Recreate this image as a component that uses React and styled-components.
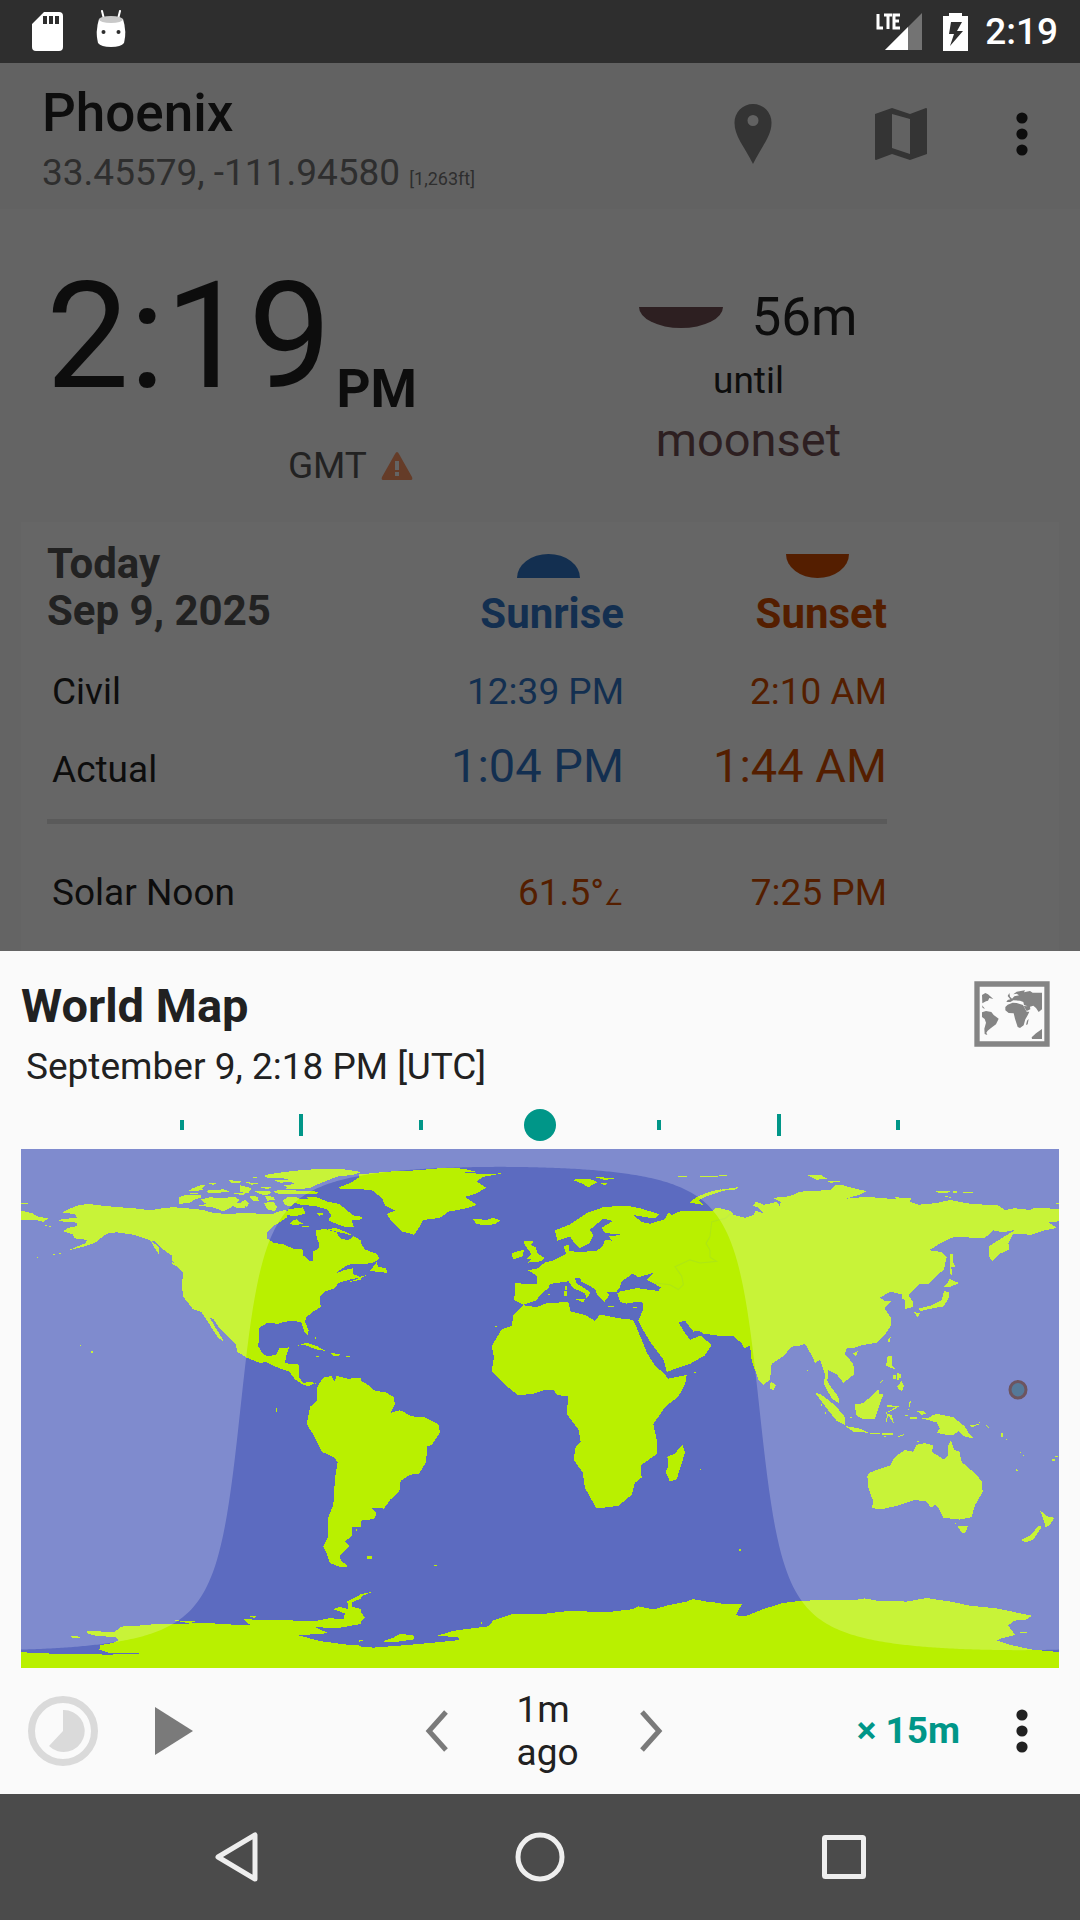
import React, { useState } from "react";
import styled, { createGlobalStyle } from "styled-components";

const GlobalStyle = createGlobalStyle`
  * { box-sizing: border-box; }
  body { margin: 0; background: #646464; font-family: Roboto, "Noto Sans", sans-serif; }
`;

const ink = "#0d0d0d";
const blue = "#132f50";
const orange = "#541e00";
const teal = "#009688";

const Screen = styled.div`
  min-height: 100vh;
  display: flex;
  flex-direction: column;
  color: ${ink};
  font-size: 37px;
  line-height: 44px;
`;
const StatusBar = styled.header`
  height: 63px;
  padding: 0 22px 0 32px;
  display: flex;
  align-items: center;
  justify-content: space-between;
  background: #2e2e2e;
  color: #fff;
`;
const StatusGroup = styled.div`
  display: flex;
  align-items: center;
  gap: ${(p) => p.$gap}px;
`;
const StatusTime = styled.span`
  font-weight: 500;
  margin-left: -4px;
`;
const ActionBar = styled.div`
  display: flex;
  justify-content: space-between;
  padding: 18px 36px 14px 42px;
  background: #626262;
`;
const City = styled.h1`
  margin: 0 0 6px;
  font-size: 53px;
  line-height: 64px;
  font-weight: 500;
`;
const Coordinates = styled.div`
  color: #2e2e2e;
  small { font-size: 18px; line-height: 20px; }
`;
const Actions = styled.div`
  display: flex;
  align-items: center;
  gap: 50px;
  padding-bottom: 8px;
`;
const IconButton = styled.button`
  display: flex;
  align-items: center;
  justify-content: center;
  width: ${(p) => p.$w}px;
  height: ${(p) => p.$h || 80}px;
  padding: 0;
  border: 0;
  background: none;
  color: inherit;
  cursor: pointer;
  svg { display: block; flex: none; }
`;
const ClockSection = styled.section`
  display: flex;
  align-items: flex-start;
  padding: 54px 0 34px 46px;
`;
const ClockRow = styled.div`
  display: flex;
  align-items: flex-end;
  gap: 5px;
`;
const ClockTime = styled.time`
  font-size: 148px;
  line-height: 148px;
`;
const Meridiem = styled.span`
  font-size: 53px;
  line-height: 44px;
  font-weight: 700;
`;
const ZoneRow = styled.div`
  display: flex;
  align-items: center;
  justify-content: flex-end;
  gap: 14px;
  margin-top: 33px;
  padding-right: 4px;
  color: #222;
`;
const NextEvent = styled.div`
  flex: 1;
  display: flex;
  flex-direction: column;
  align-items: center;
  gap: 10px;
  padding-top: 22px;
`;
const Countdown = styled.div`
  display: flex;
  align-items: center;
  gap: 28px;
  font-size: 53px;
  line-height: 64px;
`;
const HalfDisc = styled.span`
  display: block;
  width: ${(p) => p.$w}px;
  height: ${(p) => p.$h}px;
  background: ${(p) => p.$color};
  border-radius: ${(p) => (p.$up ? "50% 50% 0 0 / 100% 100% 0 0" : "0 0 50% 50% / 0 0 100% 100%")};
`;
const EventName = styled.div`
  font-size: 47px;
  line-height: 54px;
  color: #2d1f21;
`;
const Card = styled.section`
  flex: 1;
  margin: 0 21px;
  padding: 18px 172px 0 26px;
  background: #666;
`;
const SunTable = styled.table`
  width: 100%;
  table-layout: fixed;
  border-spacing: 0;
`;
const TimeCol = styled.col`
  width: 263px;
`;
const DateHead = styled.th`
  padding: 0;
  text-align: left;
  vertical-align: top;
  font-size: 42px;
  line-height: 47px;
  font-weight: 700;
  color: #222;
`;
const SunHead = styled.th`
  padding: 14px 0 0;
  text-align: right;
  font-size: 42px;
  line-height: 47px;
  font-weight: 700;
  color: ${(p) => p.$color};
`;
const HeadStack = styled.span`
  display: inline-flex;
  flex-direction: column;
  align-items: center;
  gap: 12px;
  vertical-align: top;
`;
const HeadText = styled.span`
  padding-left: 7px;
`;
const SunRow = styled.tr`
  th, td {
    padding-top: ${(p) => p.$top}px;
    padding-bottom: ${(p) => p.$bottom}px;
    padding-right: 0;
    vertical-align: baseline;
    border-bottom: ${(p) => (p.$ruled ? "5px solid #5a5a5a" : "0")};
  }
`;
const RowLabel = styled.th`
  padding-left: 5px;
  text-align: left;
  font-weight: 400;
`;
const TimeCell = styled.td`
  padding-left: 0;
  text-align: right;
  color: ${(p) => p.$color};
  font-size: ${(p) => (p.$large ? 47 : 37)}px;
  line-height: ${(p) => (p.$large ? 56 : 44)}px;
  small { font-size: 22px; line-height: 22px; }
`;
const Sheet = styled.section`
  padding: 28px 21px 0;
  background: #fafafa;
  color: #212121;
`;
const SheetHead = styled.div`
  display: flex;
  justify-content: space-between;
  align-items: flex-start;
  padding-right: 9px;
`;
const SheetTitle = styled.h2`
  margin: 0 0 12px;
  font-size: 47px;
  line-height: 54px;
  font-weight: 700;
`;
const SheetDate = styled.div`
  padding-left: 5px;
`;
const Seek = styled.div`
  display: grid;
  height: 36px;
  margin: 18px 0 6px;
  align-items: center;
`;
const Ticks = styled.div`
  grid-area: 1 / 1;
  display: grid;
  grid-template-columns: repeat(7, 1fr);
  align-items: center;
  justify-items: center;
  padding: 0 101px;
`;
const Tick = styled.span`
  width: 4px;
  height: ${(p) => (p.$tall ? 22 : 10)}px;
  background: ${teal};
`;
const SeekInput = styled.input`
  grid-area: 1 / 1;
  appearance: none;
  width: 100%;
  height: 32px;
  margin: 0;
  background: transparent;
  &::-webkit-slider-thumb {
    appearance: none;
    width: 32px;
    height: 32px;
    border-radius: 50%;
    background: ${teal};
  }
`;
const MapSvg = styled.svg`
  display: block;
  width: 100%;
  aspect-ratio: 2 / 1;
`;
const Controls = styled.div`
  display: flex;
  align-items: center;
  height: 126px;
  padding-left: 7px;
`;
const ControlGroup = styled.div`
  flex: 1;
  display: flex;
  align-items: center;
  justify-content: ${(p) => (p.$end ? "flex-end" : "flex-start")};
  gap: ${(p) => p.$gap}px;
`;
const Stepper = styled.div`
  display: flex;
  align-items: center;
  gap: 50px;
`;
const Offset = styled.span`
  width: 66px;
  padding-left: 6px;
  line-height: 43px;
`;
const SpeedButton = styled.button`
  padding: 0;
  border: 0;
  background: none;
  font: 700 37px / 44px Roboto, sans-serif;
  color: ${teal};
`;
const NavBar = styled.nav`
  display: grid;
  grid-template-columns: repeat(3, 1fr);
  justify-items: center;
  align-items: center;
  height: 126px;
  padding: 0 84px;
  background: #4b4b4b;
  color: #eee;
`;

const Dots = () => (
  <svg width="12" height="44" viewBox="0 0 12 44" fill="currentColor">
    <circle cx="6" cy="6" r="5.6" /><circle cx="6" cy="22" r="5.6" /><circle cx="6" cy="38" r="5.6" />
  </svg>
);

/* Coast lines, one list for each third of the map, 1080 units wide. */
const west = [
  "M185,210 215,197 240,188 270,186 310,191 370,196 410,199 450,204 480,199 520,195 570,199 610,203 640,212 690,215 720,212 760,213 790,214 815,216 835,208 850,204 866,205 860,225 845,235 830,244 820,250 803,265 800,285 820,298 850,303 880,315 908,318 910,335 930,352 940,350 938,325 955,315 958,300 950,285 948,262 975,258 1010,268 1020,285 1045,292 1060,278 1083,292 1083,358 1045,362 1015,380 1008,388 1030,378 1060,372 1060,390 1083,398 1050,405 1015,415 1005,430 975,440 960,455 962,485 940,498 918,515 915,528 926,552 924,568 912,555 905,530 880,525 850,528 835,533 800,532 778,545 775,600 790,622 805,628 830,622 838,605 868,602 860,622 855,648 897,652 897,690 910,705 935,702 955,712 945,706 925,715 905,708 885,695 868,672 825,658 800,645 780,647 740,632 712,615 708,595 690,575 660,548 640,520 628,514 650,550 672,585 655,575 635,545 605,500 578,490 550,455 545,420 550,385 515,350 515,335 485,315 465,295 440,288 400,275 350,268 320,272 285,298 250,310 200,322 255,300 262,290 222,285 220,275 190,265 205,255 230,250 232,240 190,237 172,232 230,225 225,215Z",
  "M955,712 970,690 995,685 1003,702 1010,685 1045,693 1083,690 1083,1123 1055,1123 1055,1150 1035,1165 1048,1178 1020,1205 1022,1220 1045,1238 1020,1240 990,1228 980,1200 970,1180 985,1150 985,1095 1000,1060 1005,980 1013,935 1000,920 965,905 940,855 920,825 930,775 952,755 950,725Z",
  "M60,1487 170,1492 320,1494 418,1493 418,1490 330,1490 298,1480 300,1467 340,1460 358,1452 345,1443 290,1440 260,1432 260,1426 345,1428 362,1413 430,1409 480,1404 560,1404 630,1402 660,1406 750,1408 730,1390 790,1395 850,1393 890,1396 940,1398 990,1388 1030,1392 1035,1375 1000,1362 1020,1356 1045,1362 1042,1340 1083,1320 1083,1332 1055,1342 1055,1355 1083,1362 1083,1405 1010,1418 945,1414 985,1432 895,1438 960,1455 1040,1465 1083,1468 1083,1536 60,1536Z",
  "M207,1442 230,1440 248,1447 220,1446Z M520,1394 600,1399 560,1402Z M750,1383 785,1384 760,1387Z",
  "M1010,140 1050,125 1083,105 1083,142 1040,142Z",
  "M893,597 920,588 950,598 978,613 945,607 915,595Z M990,617 1027,624 1000,628Z M1038,627h12v3h-12Z M947,627h10v3h-10Z M945,572h4v6h-4Z",
  "M513,353 545,365 562,378 560,386 545,375 520,362Z M450,290 478,312 478,335 462,310Z",
  "M272,613h7v6h-7Z M240,595h4v4h-4Z M828,779h4v11h-4Z M160,331h5v3h-5Z M177,328h6v3h-6Z M110,340h4v3h-4Z M135,247h6v3h-6Z M148,249h6v3h-6Z",
  "M60,204 95,212 115,222 145,228 130,238 110,232 60,232Z M60,183h24v3h-24Z",
  "M1048,412 1083,399 1083,406Z M1067,1130h5v6h-5Z",
];
const arctic = [
  "M250,48 270,42 300,38 345,32 400,28 480,26 545,36 520,44 470,50 440,62 410,74 390,84 345,88 318,86 325,80 300,78 345,72 335,66 300,68 280,60 330,60 305,54 265,54Z",
  "M280,92 320,90 415,95 412,101 300,102 285,98Z",
  "M-3,112 20,104 62,106 66,112 45,118 30,128 -3,132Z M62,118 90,112 130,114 165,110 178,120 172,128 185,135 200,142 170,144 160,138 130,154 115,148 90,140 50,138 80,132 70,126Z",
  "M170,134 195,120 208,130 200,140Z M208,108 234,110 236,122 218,122Z M255,108 280,110 285,120 262,122Z M252,128 280,126 292,140 285,154 262,148Z",
  "M22,94 40,84 60,76 76,76 66,84 70,88 45,94Z M78,92 130,88 150,94 120,98 85,98Z M85,69 108,70 100,76Z M145,60 185,64 175,70 155,68Z M180,76 215,84 205,100 180,96Z M195,66 238,70 215,74Z M160,100 200,97 190,106Z M225,94 265,92 275,98 260,106 240,102Z M218,50h12v3h-12Z M240,82 275,80 265,88Z M30,98h25v3h-25Z",
  "M308,122 325,110 350,112 360,118 385,118 380,110 410,112 440,124 478,132 500,150 520,166 545,170 548,178 515,180 522,202 495,200 470,192 445,180 455,165 440,148 405,138 360,134 345,128 335,138 315,136Z",
  "M325,148 368,142 376,160 350,168 325,166Z M340,180 352,178 358,186 372,190 345,196 330,192Z M412,160 428,158 430,164 418,167Z M365,198h22v3h-22Z M436,206 470,205 498,216 520,228 500,222 450,210Z",
];
const middle = [
  "M-3,697 20,708 45,728 75,732 100,745 105,768 92,792 118,785 130,788 152,802 195,805 235,825 240,850 215,885 202,890 198,935 178,968 150,972 122,990 118,1020 90,1045 72,1070 35,1068 50,1085 42,1100 5,1105 0,1123 -3,1123Z",
  "M-3,1470 40,1474 170,1464 298,1452 295,1443 230,1440 280,1425 385,1412 400,1395 460,1375 540,1377 620,1368 750,1370 820,1362 835,1354 880,1363 920,1352 980,1340 1000,1333 1040,1340 1083,1345 1083,1536 -3,1536Z",
  "M68,1456 100,1445 120,1434 160,1438 162,1450 110,1457Z M-3,1320 45,1310 10,1322 -3,1332Z M-3,1366 16,1387 -3,1403Z M-3,1452 20,1450 -3,1457Z",
  "M-3,100 80,92 170,88 250,81 310,83 348,92 305,95 365,98 425,97 370,107 350,120 378,138 350,155 315,165 350,188 320,198 265,208 240,226 190,232 172,262 162,275 125,265 98,240 80,215 105,205 75,190 68,172 40,147 -3,142Z",
  "M-3,292 15,318 50,330 58,345 35,358 -3,360Z M30,380 50,355 55,368 78,373 83,386Z M-3,398 20,392 -3,404Z",
  "M335,228 380,232 400,225 420,234 405,244 375,248 350,243Z",
  "M490,293 522,292 512,305 528,312 532,328 553,342 545,352 503,356 515,347 500,345 514,330 497,308Z M457,328 492,318 488,338 458,347Z",
  "M635,115 690,113 712,122 685,137 665,126Z M705,108 772,110 735,116Z M722,124 748,127 730,131Z M955,103h25v3h-25Z M1020,103h55v3h-55Z",
  "M988,182 1010,165 1050,150 1083,143 1083,150 1040,163 1015,175 1030,188Z",
  "M465,416 530,418 532,395 502,377 530,375 555,355 580,350 618,330 612,310 625,302 628,322 655,325 710,322 728,308 735,290 755,292 745,278 800,276 735,270 725,255 758,235 730,228 690,260 700,278 688,300 658,314 640,295 630,280 592,292 585,262 630,245 680,212 730,195 795,190 840,198 897,215 885,228 820,218 845,238 870,243 915,230 925,210 935,218 965,205 1060,205 1065,197 1083,197 1083,569 1030,562 1020,555 1000,556 975,525 955,530 975,560 990,580 1022,568 1055,595 1035,625 990,650 920,673 912,640 870,585 845,545 835,525 838,518 850,490 850,472 830,470 800,475 780,470 772,445 780,440 830,430 895,438 903,428 860,405 880,386 835,398 818,388 785,410 778,430 770,440 740,440 748,450 733,470 712,450 705,432 665,412 660,400 645,402 650,418 670,428 692,443 680,460 675,445 640,430 625,410 570,418 565,430 540,450 530,465 490,478 463,465Z",
  "M490,480 530,485 560,474 625,470 632,498 675,508 705,525 720,507 780,518 818,522 828,540 845,580 862,620 885,655 912,678 925,693 980,682 975,710 955,745 915,775 880,825 890,870 890,912 842,945 845,980 825,995 815,1030 775,1062 710,1070 698,1050 675,1010 668,965 642,930 645,895 662,875 655,840 620,795 625,745 592,740 580,725 550,727 520,737 475,741 440,715 395,672 402,630 395,598 425,550 455,540 460,510Z",
  "M648,463 674,462 672,472Z M612,437h10v15h-10Z M615,425h5v9h-5Z M743,482h20v4h-20Z M820,485h12v4h-12Z M565,446h5v3h-5Z M405,541h6v3h-6Z M1002,674h7v3h-7Z M1020,955h3v3h-3Z M20,1208h16v8h-16Z M221,1235h9v3h-9Z M362,1400h4v4h-4Z",
  "M967,885 975,908 950,985 930,992 917,965 925,945 922,920 945,910Z",
];
const east = [
  "M-3,197 30,205 42,218 75,226 100,218 107,205 133,214 115,197 100,190 108,178 130,188 170,180 180,192 182,180 158,168 210,163 240,150 330,145 345,132 365,130 400,140 440,148 420,158 380,170 440,165 480,168 560,175 595,188 650,183 690,174 750,185 835,190 855,203 885,198 930,203 945,196 1010,200 1020,203 1020,236 985,238 1010,255 975,262 935,275 880,272 865,300 868,318 840,330 818,352 808,340 808,308 845,285 888,260 850,268 820,262 795,284 700,282 660,300 628,320 665,325 680,340 672,375 625,418 600,418 565,450 578,468 578,485 556,490 555,465 545,460 545,448 510,440 480,458 495,468 515,467 493,487 512,515 512,540 495,565 470,588 420,597 400,605 380,605 375,622 400,650 403,680 370,705 350,680 325,668 322,700 335,720 355,745 358,765 335,750 312,710 315,680 300,638 285,647 275,625 255,592 240,597 215,600 190,628 155,650 150,695 130,712 115,695 95,640 90,597 72,605 65,590 40,570 -3,569Z",
  "M-3,1347 65,1348 48,1380 75,1383 130,1362 190,1344 240,1338 330,1335 400,1336 435,1331 480,1339 560,1340 620,1330 690,1340 750,1352 830,1360 935,1381 920,1392 880,1396 865,1410 885,1437 845,1447 830,1453 870,1466 940,1480 1020,1487 1020,1536 -3,1536Z",
  "M-3,145 55,137 45,144 -3,148Z M-3,102h25v3h-25Z",
  "M152,700 167,712 160,727 150,722Z M285,733 305,740 345,770 375,805 375,828 350,815 325,785Z M375,830 420,838 447,850 400,847Z M450,850h30v3h-30Z M485,852h35v3h-35Z M530,862 557,852 545,860Z M492,860 505,862 495,864Z M390,803h6v4h-6Z",
  "M403,768 430,764 475,725 478,737 490,738 480,765 465,810 430,810 410,800Z M492,793 512,788 540,772 500,770 500,774 528,775 502,790 497,826 505,800 522,825 515,798Z",
  "M592,788 610,785 620,795 605,798Z M605,808 625,808 635,800 650,795 700,805 735,832 745,850 760,866 735,862 715,845 700,857 675,855 650,850 660,838 650,820Z M742,830 775,825 780,815 778,825 760,833Z",
  "M442,975 450,965 510,945 525,920 555,900 580,905 590,885 615,880 640,887 635,905 672,928 685,915 685,885 693,872 703,900 718,905 725,935 765,968 785,990 788,1022 765,1060 755,1095 720,1102 670,1097 655,1066 645,1060 633,1068 620,1050 585,1045 530,1062 480,1073 455,1068 460,1050 445,1010Z",
  "M713,1122 743,1122 738,1137 728,1143Z M960,1075 980,1092 1002,1097 990,1118 976,1125 973,1110Z M965,1123 940,1160 918,1168 903,1162 935,1145 955,1120Z",
  "M672,427 685,412 688,403 716,415 695,425Z M672,437 688,443 685,462 670,483 640,488 600,497 595,490 635,480 665,465Z M690,330 698,330 698,350 706,368 694,370 697,392 690,388Z M583,500 600,503 592,516Z",
  "M503,578 512,572 507,593Z M400,620 415,612 407,628Z M503,628 517,628 515,652 525,665 508,660 498,655Z M532,715 545,700 552,715 545,730 535,722Z M518,683h10v12h-10Z M530,676h6v20h-6Z M538,680h6v12h-6Z M478,706 492,692 482,706Z",
  "M262,103 300,100 322,113 290,115Z M322,118 368,121 330,124Z M645,147 690,147 690,152 655,154Z M700,148h12v5h-12Z M728,151h30v3h-30Z M672,163 700,165 690,168Z M525,166 575,170 570,178 530,173Z M1008,184h12v3h-12Z",
  "M880,950 902,965 890,960Z M996,926h9v6h-9Z M1006,917h8v3h-8Z M843,852h6v9h-6Z M858,867h4v4h-4Z M900,905h4v4h-4Z M908,914h4v4h-4Z M798,827 806,835 802,834Z M568,760 574,757 565,785Z M555,797h8v5h-8Z M570,805h20v4h-20Z M590,875h8v3h-8Z M57,1188h6v4h-6Z M705,1112h4v3h-4Z M900,1429h22v3h-22Z M262,668h3v3h-3Z M302,767h4v5h-4Z M315,790h4v5h-4Z",
];
const regions = [
  { id: "west", place: "translate(-63 -26)", paths: west },
  { id: "arctic", place: "translate(477 32) scale(1 0.968)", paths: arctic },
  { id: "middle", place: "translate(1017 -26)", paths: middle },
  { id: "east", place: "translate(2097 -26)", paths: east },
];

/* The terminator over a plate carree map, for a sun low over the equator. */
const MAP_W = 3114;
const MAP_H = 1507;
const terminator = (() => {
  const tilt = Math.tan((6.2 * Math.PI) / 180);
  let d = "M0,0";
  for (let x = 0; x <= MAP_W; x += 6) {
    const lon = (x / MAP_W) * 2 * Math.PI - Math.PI + (13.9 * Math.PI) / 180;
    const lat = Math.atan(Math.cos(lon) / tilt);
    d += `L${x},${((0.5 - lat / Math.PI) * MAP_H).toFixed(1)}`;
  }
  return `${d}L${MAP_W},0Z`;
})();

const WorldMap = () => (
  <MapSvg viewBox={`0 0 ${MAP_W} ${MAP_H}`} preserveAspectRatio="none" role="img" aria-label="World map with day and night">
    <rect width={MAP_W} height={MAP_H} fill="#5c6bc0" />
    <g fill="#b9f000" shapeRendering="crispEdges">
      {regions.map((r) => (
        <g key={r.id} transform={r.place}>
          {r.paths.map((d) => <path key={d} d={d} />)}
        </g>
      ))}
    </g>
    <path transform="translate(1017 -26)" fill="none" stroke="#aee614" strokeWidth="3" d="M1110,215 1095,228 1075,232 1055,238 1050,280 1038,300 1050,320 1050,340 1070,352 1020,357 990,348 945,368 965,395 970,420 955,434 930,420 885,415" />
    <path d={terminator} fill="#fff" fillOpacity="0.22" />
    <circle cx="2991" cy="699" r="24" fill="#557999" stroke="#6d5560" strokeWidth="9" />
  </MapSvg>
);

const MapThumb = () => (
  <svg width="76" height="66" viewBox="222 93 228 198" fill="#848484">
    <path fillRule="evenodd" d="M223,94H449V290H223Z M239,110V274H433V110Z" />
    <path d="M246,135 256,129 264,133 280,147 268,144 264,152 258,154 247,160Z M246,166 255,176 248,174Z M246,187 258,183 274,186 281,195 296,206 288,223 273,234 263,242 259,248 262,255 254,252 253,236 258,218 254,207 246,201Z" />
    <path d="M323,138 328,129 330,140 336,146 343,139 357,136 350,131 340,133 350,125 375,121 372,127 390,123 398,128H426V178L416,186 408,174 400,167 390,170 391,178 380,183 371,168 383,169 372,165 370,156 360,152 340,151 331,156H319L323,150 331,148Z" />
    <path d="M323,164 338,158 350,159 369,165 380,185H388L383,196 376,208 371,226 360,234 353,231 345,206 341,190 326,189 316,181 316,171Z M381,212 386,207 383,223 378,225Z M395,262 408,250 426,237V267H396Z" />
  </svg>
);

export default function App() {
  const [offset, setOffset] = useState(0);
  return (
    <>
      <GlobalStyle />
      <Screen>
        <StatusBar>
          <StatusGroup $gap={32}>
            <svg width="31" height="39" viewBox="0 0 31 39">
              <path fill="#fff" fillRule="evenodd" d="M12,0H27Q31,0 31,4V35Q31,39 27,39H4Q0,39 0,35V12Z M11,4V12H15V4Z M17,4V12H21V4Z M23,4V12H27V4Z" />
            </svg>
            <svg width="32" height="44" viewBox="0 0 32 44">
              <path d="M7,1 9,9 M25,1 23,9" stroke="#fff" strokeWidth="2" strokeLinecap="round" />
              <path fill="#fff" d="M4,9Q16,6 28,9Q32,22 29,33Q26,37 16,37T3,33Q0,22 4,9Z" />
              <ellipse cx="16" cy="9.500" rx="12" ry="3.500" fill="#c8c8c8" />
              <circle cx="8.500" cy="22" r="2" fill="#2e2e2e" /><circle cx="23.500" cy="22" r="2" fill="#2e2e2e" />
            </svg>
          </StatusGroup>
          <StatusGroup $gap={21}>
            <svg width="46" height="38" viewBox="0 0 46 38">
              <path d="M46,0V37H9Z" fill="#737373" /><path d="M32,14V37H9Z" fill="#fff" />
              <path d="M2,1V15H7 M8,2H16 M12,2V16 M24,2H18V15H24 M18,8H23" fill="none" stroke="#fff" strokeWidth="3" />
            </svg>
            <svg width="25" height="38" viewBox="0 0 25 38">
              <path fill="#fff" fillRule="evenodd" d="M6,0H19V3H25V38H0V3H6Z M8,9 6,21H11L7,33 20,18H14L19,9Z" />
            </svg>
            <StatusTime>2:19</StatusTime>
          </StatusGroup>
        </StatusBar>

        <ActionBar>
          <div>
            <City>Phoenix</City>
            <Coordinates>33.45579, -111.94580 <small>[1,263ft]</small></Coordinates>
          </div>
          <Actions>
            <IconButton $w={98} aria-label="Location">
              <svg width="38" height="60" viewBox="0 0 38 60"><path fill="#343434" fillRule="evenodd" d="M19,0A18.500,18.500 0 0 0 .500,19C.500,32 10,42 19,60C28,42 37.500,32 37.500,19A18.500,18.500 0 0 0 19,0ZM19,11A5.500,5.500 0 1 1 19,22A5.500,5.500 0 1 1 19,11Z" /></svg>
            </IconButton>
            <IconButton $w={98} aria-label="Map">
              <svg width="54" height="54" viewBox="0 0 54 54"><path fill="#343434" fillRule="evenodd" d="M1,7 18,1 36,7 52,1Q53,1 53,2V47L36,53 18,47 2,53Q1,53 1,52Z M18,7V41L36,47V12Z" /></svg>
            </IconButton>
            <IconButton $w={44} aria-label="More"><Dots /></IconButton>
          </Actions>
        </ActionBar>

        <ClockSection>
          <div>
            <ClockRow><ClockTime>2:19</ClockTime><Meridiem>PM</Meridiem></ClockRow>
            <ZoneRow>
              GMT
              <svg width="32" height="28" viewBox="0 0 32 28"><path fill="#653c28" fillRule="evenodd" d="M16,0Q17,0 18,2L31,25Q32,28 30,28H2Q0,28 1,25L14,2Q15,0 16,0Z M14,9V18H18V9Z M14,20V24H18V20Z" /></svg>
            </ZoneRow>
          </div>
          <NextEvent>
            <Countdown><HalfDisc $w={84} $h={21} $color="#2d1f21" />56m</Countdown>
            <div>until</div>
            <EventName>moonset</EventName>
          </NextEvent>
        </ClockSection>

        <Card>
          <SunTable>
            <colgroup><col /><TimeCol /><TimeCol /></colgroup>
            <thead>
              <tr>
                <DateHead scope="col">Today<br />Sep 9, 2025</DateHead>
                <SunHead scope="col" $color={blue}>
                  <HeadStack><HalfDisc $up $w={63} $h={24} $color={blue} /><HeadText>Sunrise</HeadText></HeadStack>
                </SunHead>
                <SunHead scope="col" $color={orange}>
                  <HeadStack><HalfDisc $w={63} $h={24} $color={orange} /><HeadText>Sunset</HeadText></HeadStack>
                </SunHead>
              </tr>
            </thead>
            <tbody>
              <SunRow $top={33} $bottom={12}>
                <RowLabel scope="row">Civil</RowLabel>
                <TimeCell $color={blue}>12:39 PM</TimeCell>
                <TimeCell $color={orange}>2:10 AM</TimeCell>
              </SunRow>
              <SunRow $top={12} $bottom={25} $ruled>
                <RowLabel scope="row">Actual</RowLabel>
                <TimeCell $large $color={blue}>1:04 PM</TimeCell>
                <TimeCell $large $color={orange}>1:44 AM</TimeCell>
              </SunRow>
              <SunRow $top={47} $bottom={36}>
                <RowLabel scope="row">Solar Noon</RowLabel>
                <TimeCell $color={orange}>61.5°<small>∠</small></TimeCell>
                <TimeCell $color={orange}>7:25 PM</TimeCell>
              </SunRow>
            </tbody>
          </SunTable>
        </Card>

        <Sheet>
          <SheetHead>
            <div>
              <SheetTitle>World Map</SheetTitle>
              <SheetDate>September 9, 2:18 PM [UTC]</SheetDate>
            </div>
            <IconButton $w={76} $h={70} aria-label="Change map"><MapThumb /></IconButton>
          </SheetHead>
          <Seek>
            <Ticks>
              {[0, 1, 0, 0, 0, 1, 0].map((tall, i) => <Tick key={i} $tall={tall === 1} />)}
            </Ticks>
            <SeekInput type="range" min="-72" max="72" value={offset} aria-label="Time offset" onChange={(e) => setOffset(Number(e.target.value))} />
          </Seek>
          <WorldMap />
          <Controls>
            <ControlGroup $gap={44}>
              <IconButton $w={70} aria-label="Reset">
                <svg width="70" height="70" viewBox="0 0 70 70"><circle cx="35" cy="35" r="31.500" fill="none" stroke="#dadada" strokeWidth="7" /><path fill="#dadada" d="M35,14A21,21 0 1 1 21,50L35,35Z" /></svg>
              </IconButton>
              <IconButton $w={64} aria-label="Play">
                <svg width="38" height="48" viewBox="0 0 38 48"><path d="M0,0 38,24 0,48Z" fill="#7a7a7a" /></svg>
              </IconButton>
            </ControlGroup>
            <Stepper>
              <IconButton $w={48} aria-label="Earlier">
                <svg width="24" height="42" viewBox="0 0 24 42"><path d="M21,2 4,21 21,40" fill="none" stroke="#7a7a7a" strokeWidth="5" /></svg>
              </IconButton>
              <Offset>1m<br />ago</Offset>
              <IconButton $w={48} aria-label="Later">
                <svg width="24" height="42" viewBox="0 0 24 42"><path d="M3,2 20,21 3,40" fill="none" stroke="#7a7a7a" strokeWidth="5" /></svg>
              </IconButton>
            </Stepper>
            <ControlGroup $end $gap={25}>
              <SpeedButton>× 15m</SpeedButton>
              <IconButton $w={74} aria-label="More options"><Dots /></IconButton>
            </ControlGroup>
          </Controls>
        </Sheet>

        <NavBar>
          <IconButton $w={96} aria-label="Back">
            <svg width="54" height="52" viewBox="0 0 54 52"><path d="M46,4V48L9,26Z" fill="none" stroke="currentColor" strokeWidth="5" strokeLinejoin="round" /></svg>
          </IconButton>
          <IconButton $w={96} aria-label="Home">
            <svg width="50" height="50" viewBox="0 0 50 50"><circle cx="25" cy="25" r="22" fill="none" stroke="currentColor" strokeWidth="5" /></svg>
          </IconButton>
          <IconButton $w={96} aria-label="Recent apps">
            <svg width="44" height="44" viewBox="0 0 44 44"><rect x="2.500" y="2.500" width="39" height="39" rx="1" fill="none" stroke="currentColor" strokeWidth="5" /></svg>
          </IconButton>
        </NavBar>
      </Screen>
    </>
  );
}
